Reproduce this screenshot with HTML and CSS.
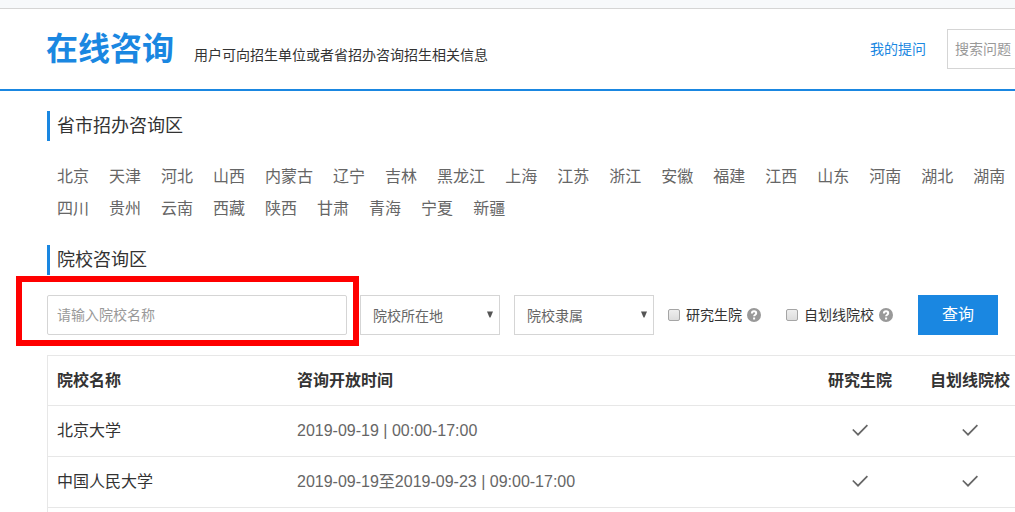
FILE: index.html
```html
<!DOCTYPE html>
<html lang="zh-CN">
<head>
<meta charset="utf-8">
<title>在线咨询</title>
<link rel="stylesheet" href="styles.css">
</head>
<body>
<div class="topbar"></div>
<header class="header">
  <div class="brand">
    <h1 class="brand-title">在线咨询</h1>
    <p class="brand-note">用户可向招生单位或者省招办咨询招生相关信息</p>
  </div>
  <a class="my-questions" href="#">我的提问</a>
  <input class="question-search" type="text" placeholder="搜索问题" aria-label="搜索问题">
</header>
<main class="main">
  <h2 class="section-title">省市招办咨询区</h2>
  <nav class="provinces">
    <a href="#">北京</a><a href="#">天津</a><a href="#">河北</a><a href="#">山西</a><a href="#">内蒙古</a><a href="#">辽宁</a><a href="#">吉林</a><a href="#">黑龙江</a><a href="#">上海</a><a href="#">江苏</a><a href="#">浙江</a><a href="#">安徽</a><a href="#">福建</a><a href="#">江西</a><a href="#">山东</a><a href="#">河南</a><a href="#">湖北</a><a href="#">湖南</a><a href="#">四川</a><a href="#">贵州</a><a href="#">云南</a><a href="#">西藏</a><a href="#">陕西</a><a href="#">甘肃</a><a href="#">青海</a><a href="#">宁夏</a><a href="#">新疆</a>
  </nav>
  <h2 class="section-title">院校咨询区</h2>
  <form class="filters">
    <div class="name-field">
      <input class="name-input" type="text" placeholder="请输入院校名称" aria-label="院校名称">
      <span class="highlight"></span>
    </div>
    <div class="select-box">
      <select aria-label="院校所在地"><option>院校所在地</option></select>
      <svg class="arrow" viewBox="0 0 8 7" aria-hidden="true"><path d="M1 0.500h6L4.500 6.500h-1z"/></svg>
    </div>
    <div class="select-box">
      <select aria-label="院校隶属"><option>院校隶属</option></select>
      <svg class="arrow" viewBox="0 0 8 7" aria-hidden="true"><path d="M1 0.500h6L4.500 6.500h-1z"/></svg>
    </div>
    <div class="checks">
      <label class="check"><input type="checkbox"><span>研究生院</span>
        <svg class="help" viewBox="0 0 14 14" aria-hidden="true"><circle cx="7" cy="7" r="7"/><path d="M4.900 5.500c0-3 4.300-2.700 4.300-.3 0 1.500-2.100 1.500-2.100 3.100"/><rect x="6.100" y="9.500" width="2" height="2"/></svg>
      </label>
      <label class="check"><input type="checkbox"><span>自划线院校</span>
        <svg class="help" viewBox="0 0 14 14" aria-hidden="true"><circle cx="7" cy="7" r="7"/><path d="M4.900 5.500c0-3 4.300-2.700 4.300-.3 0 1.500-2.100 1.500-2.100 3.100"/><rect x="6.100" y="9.500" width="2" height="2"/></svg>
      </label>
    </div>
    <button class="submit" type="button">查询</button>
  </form>
  <div class="schools-frame">
    <table class="schools">
      <thead>
        <tr><th class="col-name">院校名称</th><th>咨询开放时间</th><th class="col-grad">研究生院</th><th class="col-line">自划线院校</th></tr>
      </thead>
      <tbody>
        <tr>
          <td class="school">北京大学</td><td>2019-09-19 | 00:00-17:00</td>
          <td class="mark"><svg class="tick" viewBox="0 0 16 14" role="img" aria-label="是"><path d="M.8 5.500 6 10.700 15.400 1.200"/></svg></td>
          <td class="mark"><svg class="tick" viewBox="0 0 16 14" role="img" aria-label="是"><path d="M.8 5.500 6 10.700 15.400 1.200"/></svg></td>
        </tr>
        <tr>
          <td class="school">中国人民大学</td><td>2019-09-19至2019-09-23 | 09:00-17:00</td>
          <td class="mark"><svg class="tick" viewBox="0 0 16 14" role="img" aria-label="是"><path d="M.8 5.500 6 10.700 15.400 1.200"/></svg></td>
          <td class="mark"><svg class="tick" viewBox="0 0 16 14" role="img" aria-label="是"><path d="M.8 5.500 6 10.700 15.400 1.200"/></svg></td>
        </tr>
      </tbody>
    </table>
  </div>
</main>
</body>
</html>
```
FILE: styles.css
```css
* { box-sizing: border-box; }

body {
  display: flex;
  flex-direction: column;
  min-height: 100vh;
  margin: 0;
  background: #fff;
  color: #333;
  font: 14px/20px "Liberation Sans", "Noto Sans CJK SC", sans-serif;
}

input, select, button { font: inherit; margin: 0; }
a { text-decoration: none; }
svg { display: block; }

.topbar {
  height: 9px;
  background: #f7f9fb;
  border-bottom: 1px solid #d5d5d5;
}

.header {
  display: flex;
  align-items: center;
  height: 82px;
  padding-left: 46px;
  border-bottom: 2px solid #1a87e1;
}

.brand {
  display: flex;
  flex: 1;
  align-items: baseline;
  gap: 20px;
}

.brand-title {
  margin: 0;
  color: #1a87e1;
  font-size: 32px;
  line-height: 40px;
}

.brand-note { margin: 0; }

.my-questions {
  margin-right: 21px;
  color: #1a87e1;
}

.question-search {
  width: 68px;
  height: 40px;
  padding: 0 0 0 7px;
  border: 1px solid #d5d5d5;
  border-right: 0;
}

::placeholder { color: #999; opacity: 1; }

.main {
  display: flex;
  flex: 1;
  flex-direction: column;
  padding: 20px 0 0 47px;
}

.section-title {
  margin: 0;
  padding-left: 7px;
  border-left: 3px solid #1a87e1;
  font-size: 18px;
  font-weight: 400;
  line-height: 30px;
}

.provinces {
  display: flex;
  flex-wrap: wrap;
  column-gap: 20px;
  padding: 20px 0 20px 10px;
  font-size: 16px;
  line-height: 32px;
}

.provinces a { color: #666; }

.filters {
  display: flex;
  align-items: center;
  padding: 20px 0;
}

.name-field {
  position: relative;
  width: 300px;
  margin-right: 13px;
}

.name-input {
  display: block;
  width: 100%;
  height: 40px;
  padding: 0 9px;
  border: 1px solid #d5d5d5;
  border-radius: 2px;
}

.highlight {
  position: absolute;
  inset: -19px -12px -11px -31px;
  border: 6px solid #f00;
  pointer-events: none;
}

.select-box {
  position: relative;
  width: 140px;
  margin-right: 14px;
}

.select-box select {
  display: block;
  width: 100%;
  height: 40px;
  padding: 2px 12px 0;
  border: 1px solid #d5d5d5;
  border-radius: 0;
  background: #fff;
  color: #666;
  appearance: none;
}

.arrow {
  position: absolute;
  top: 16px;
  right: 6px;
  width: 8px;
  height: 7px;
  fill: #555;
  pointer-events: none;
}

.checks {
  display: flex;
  gap: 25px;
  margin-right: 25px;
}

.check {
  display: flex;
  align-items: center;
}

.check input {
  width: 12px;
  height: 12px;
  margin-right: 6px;
  border: 1px solid #a5a5a5;
  border-radius: 2px;
  background: linear-gradient(#eee, #ddd);
  appearance: none;
}

.help {
  width: 14px;
  height: 14px;
  margin-left: 5px;
}

.help circle { fill: #999; }
.help rect { fill: #fff; }
.help path { fill: none; stroke: #fff; stroke-width: 2; }

.submit {
  width: 80px;
  height: 40px;
  padding: 0;
  border: 0;
  background: #1a87e1;
  color: #fff;
  font-size: 16px;
}

.schools-frame {
  flex: 1;
  border-top: 1px solid #e7e7e7;
  border-left: 1px solid #e7e7e7;
}

.schools {
  width: 100%;
  border-spacing: 0;
  table-layout: fixed;
  font-size: 16px;
}

.schools th, .schools td {
  height: 51px;
  padding: 0 0 0 9px;
  border-bottom: 1px solid #e7e7e7;
  color: #666;
  text-align: left;
}

.schools th {
  height: 50px;
  color: #333;
}

.schools .col-name { width: 240px; }
.schools .col-grad { width: 130px; }
.schools .col-line { width: 90px; }

.schools .col-grad, .schools .col-line, .schools .mark {
  padding: 0;
  text-align: center;
}

.schools .school { color: #333; }

.tick {
  width: 16px;
  height: 14px;
  margin: 0 auto;
  fill: none;
  stroke: #666;
  stroke-width: 1.7;
}
```
